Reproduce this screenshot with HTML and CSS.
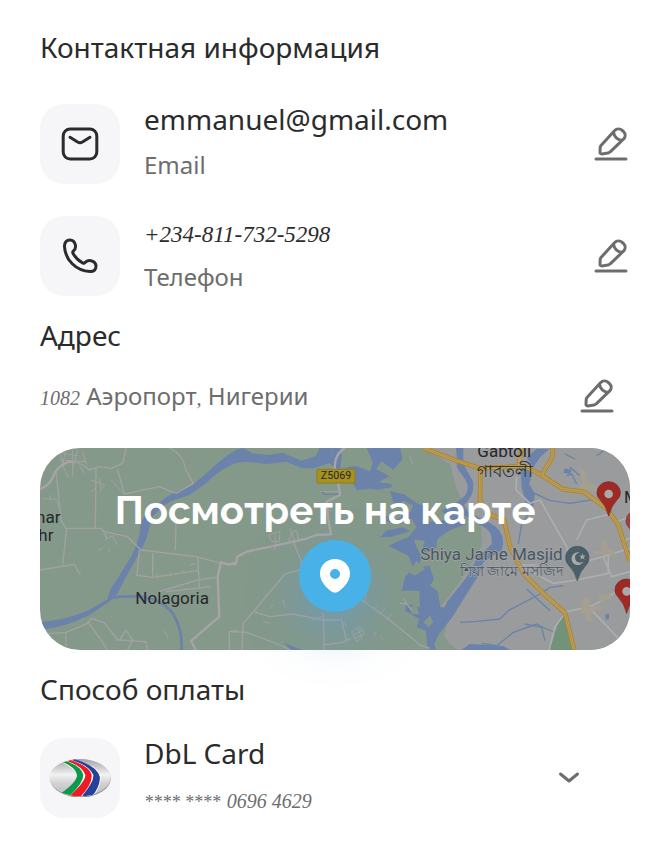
FILE: index.html
```html
<!DOCTYPE html>
<html lang="ru">
<head>
<meta charset="utf-8">
<meta name="viewport" content="width=device-width, initial-scale=1">
<title>Контактная информация</title>
<link rel="stylesheet" href="styles.css">
</head>
<body>
<svg class="sprite" aria-hidden="true">
  <symbol id="pencil" viewBox="0 0 36 36">
    <path d="M2 33H32"/>
    <path transform="translate(-1 -2)" d="M8 21.500 21.700 6.600C23.800 4.400 27 4.300 29.200 6.400L30.500 7.600C32.600 9.600 32.700 12.700 30.700 14.900L17.200 27.800Q16.200 28.800 15 29.100L8.800 29.900Q7 30 7 28.200L7.200 23.500Q7.200 22.400 8 21.500ZM20.500 8.300Q21.800 15.300 29 16.500"/>
  </symbol>
</svg>
<main class="page">
  <section class="section">
    <h2 class="heading">Контактная информация</h2>
    <div class="list">
      <div class="row">
        <div class="tile">
          <svg class="tile-icon" viewBox="0 0 40 40" aria-hidden="true"><rect x="3.200" y="5" width="33.600" height="30" rx="7"/><path d="m10 13.300 7.600 4.700q2.400 1.300 4.800 0l7.600-4.700"/></svg>
        </div>
        <div class="details">
          <p class="title">emmanuel@gmail.com</p>
          <p class="note">Email</p>
        </div>
        <button class="icon-button" type="button" aria-label="Изменить email"><svg class="pencil"><use href="#pencil"/></svg></button>
      </div>
      <div class="row">
        <div class="tile">
          <svg class="tile-icon" viewBox="0 0 40 40" aria-hidden="true"><path d="M4.500 10.500C4.300 6.200 6.500 4 10 4C13.500 4 14.600 5.600 15.400 9C16 11.800 15.600 13 13.300 15.100C12.600 15.800 12.600 16.600 13.100 17.500C15.400 21.600 18.400 24.800 22.600 26.900C23.500 27.400 24.300 27.300 25 26.500C26.800 24.300 28.200 23.900 31 24.700C34.600 25.600 36 27 36 30.300C36 33.800 33.800 35.600 30 35.500C16 35 5.100 23.800 4.500 10.500Z"/></svg>
        </div>
        <div class="details">
          <p class="title"><span class="phone">+234-811-732-5298</span></p>
          <p class="note">Телефон</p>
        </div>
        <button class="icon-button" type="button" aria-label="Изменить телефон"><svg class="pencil"><use href="#pencil"/></svg></button>
      </div>
    </div>
  </section>

  <section class="section">
    <h2 class="heading">Адрес</h2>
    <div class="address">
      <p class="note"><span class="digits">1082</span> Аэропорт<span class="digits">,</span> Нигерии</p>
      <button class="icon-button" type="button" aria-label="Изменить адрес"><svg class="pencil"><use href="#pencil"/></svg></button>
    </div>
    <a class="map" href="#map">
      <svg class="map-art" viewBox="0 0 1770 606" preserveAspectRatio="xMidYMid slice" aria-hidden="true">
        <rect class="land" width="1770" height="606"/>
        <!-- city area -->
        <g transform="translate(930 -12)">
          <path class="city" d="M225 12H860V640H350L300 600 282 575 290 545 270 490 300 425 370 350 397 300 385 225 340 180 318 130 300 60 225 12Z"/>
          <path class="land" d="M300 120 340 180 390 225 397 300 360 365 325 420 275 485 200 400 250 300Z"/>
        </g>
        <!-- rivers -->
        <g transform="translate(-12 -24)">
          <path class="water" d="M12 545Q70 545 155 512L215 478Q218 450 245 415L285 350Q312 300 313 260Q320 220 365 193Q400 158 470 135L530 83Q565 50 600 30L620 24 650 40 700 45 740 38 797 62 840 48 850 24H890L885 60 892 65 832 85 797 85 752 65 692 72 632 65 600 68Q550 88 510 130L460 165 415 180Q385 190 350 230Q340 260 330 300L310 338 268 415 240 468Q215 490 160 525 80 565 16 568Z"/>
          <path class="stream" d="M232 473Q270 467 310 470Q375 476 410 520Q442 570 436 640"/>
        </g>
        <g transform="translate(930 -12)">
          <path class="water" d="M-30 12-24 35-30 75 0 68 18 66 60 82 68 55 50 12H150L158 45 130 78 95 52 78 75 122 98 126 130 80 137 60 134 20 138-5 95-60 60-50 12Z"/>
          <path class="water" d="M120 140 165 152 200 178 232 190 215 235 270 232 320 218 350 240 300 258 262 285 258 312 212 330 225 290 170 285 200 250 185 225 150 240 90 228 120 210 160 215 175 190 130 175Z"/>
          <path class="water" d="M90 280 108 260 160 250 180 262 125 278ZM115 305 160 285 190 278 200 310 215 340 205 370 238 365 252 405 240 425 262 440 272 490 300 488 282 535 235 640 228 560 200 550 208 525 165 500 168 480 210 490 208 440 155 440 165 400 190 370 175 335Z"/>
          <path class="water" d="M318 12Q322 50 320 70L345 105Q362 130 345 155L310 182 275 200 300 222 340 212 395 245Q430 260 425 300L380 345 350 400 290 475Q275 520 230 550L235 625H260L250 590Q310 520 325 490L385 395 400 355 455 318Q472 265 420 237L355 205 340 185Q378 150 368 110L340 60V12Z"/>
          <path class="water" d="M530 40 560 15H598L570 40 550 70ZM512 75 548 80 538 120 555 150 548 195 530 188 515 130ZM300 640 360 600 460 606 500 630V640Z"/>
          <path class="land" d="M145 185 160 170 190 185 180 205ZM175 385 200 350 225 375 195 395ZM180 490 200 485 208 510 185 510ZM220 535 240 515 250 535 235 550ZM85 115 120 95 128 120ZM110 210 145 195 155 220 125 230Z"/>
          <path class="creek" d="M330 535 380 532 450 525 475 500 570 450 600 430 640 425M395 598 440 605 490 565 560 540 590 555 640 575M530 435 600 500M548 145 600 170 660 178 740 165M550 190 515 240 505 300M580 340 625 350"/>
          <path class="creek" d="M660 70 690 95M645 30 675 45M650 95 665 90 680 120M760 20 740 35M525 540 575 550 585 590"/>
        </g>
        <!-- local roads -->
        <g transform="translate(-12 -24)">
          <path class="lane" d="M12 148Q45 135 58 95Q80 65 110 65Q140 70 160 90L190 80 225 85 260 70 270 24M60 90 75 240 90 265 195 265 205 275 275 290 315 330 480 350 555 370M12 390 115 373 133 405M92 265 80 375M180 85 178 265M400 24Q440 40 450 90L472 130 420 160 370 140 265 162 245 90M350 330V410M300 405 350 412 485 392M310 330 303 405M420 240 418 330M485 350 490 445M370 455 485 420 540 412M390 455 525 440M12 583 90 577 155 550 165 535 205 548 245 600 330 605 335 640M90 577V640M155 545 195 600 220 640M250 600 270 570 290 600 275 630M580 640V575L605 573"/>
          <path class="lane thin" d="M70 24 85 90M78 40 130 48M90 24 80 75M110 24V110M125 30 108 90M140 35 152 75M70 60 150 65M85 90 100 115M130 75 145 100M165 120 205 135 190 155M190 115 195 145M180 145 165 155M20 175 60 178 72 205M40 180 45 165M195 265 215 295 235 285M210 280V300M230 290 245 315M185 332 200 325M218 325 220 335M360 400 365 415M400 395 405 410M440 390 445 405M460 375 478 370M385 572 397 595M225 120 262 160"/>
          <path class="road" d="M12 148Q45 135 58 95Q80 65 110 65M602 372 575 373 555 367 545 410 550 530 465 603 485 640"/>
        </g>
        <g transform="translate(570 -24)">
          <path class="road" d="M345 24Q310 45 315 90L325 130 330 165 290 185 295 240 303 283 260 285 225 297 135 317 50 335 22 350 18 368-2 373"/>
          <path class="lane" d="M190 305 215 365 210 390 165 402 70 515 40 550 35 640M70 515 120 530 190 522 280 540H335L350 605M280 520 283 640M280 615 340 607 360 595M0 575 50 577 150 615 200 640M395 480 480 540 570 615 600 625M510 490 530 492 545 510M520 475 530 490"/>
          <path class="lane thin" d="M115 285 150 275 148 305H125ZM185 280 200 270 205 300 175 305ZM135 285V330M180 265 195 310M270 155H325M265 190 295 240M280 215 305 210M75 520 85 510M120 500 130 495M160 480 165 500M245 540 275 530M365 575 390 560 405 580 380 605ZM370 585 400 570M375 595 400 582M385 565 395 595M405 485 410 465M430 510 445 495M450 525 465 505M470 540 485 520M340 545 350 560M430 590 440 575M450 590 460 600M540 50 550 75M100 545 120 550"/>
          <path class="creek" d="M275 155 285 163H325"/>
          <path class="water" d="M162 608 215 630 220 640 185 632Z"/>
        </g>
        <g transform="translate(1170 -24)">
          <path class="park" d="M400 520 435 640H355L385 550Z"/>
          <path class="lane city-lane" d="M260 110 258 150 300 190 330 180 410 320M410 515 480 500 520 480 600 430M480 505 570 600M405 520 375 560 355 640M440 300 470 240 540 222M560 245 600 230M410 320 430 375 520 350 600 325M520 350 530 375 545 410 600 395M285 385 370 430 440 420 535 400V345M270 375 325 375M585 300 600 295"/>
          <path class="block" d="M445 85 465 90 470 120 500 140 510 155 480 152 445 145 458 125ZM515 300 530 302 535 325 555 330 553 345 490 342 485 335 515 330ZM458 475 475 472 480 500 510 492 512 508 482 515 488 545 468 543 465 520 450 518ZM505 468 540 462 545 475 510 485ZM300 380 325 375 320 390Z"/>
          <path class="water" d="M525 525 537 520 537 537 528 540ZM405 85 425 90 420 102 400 98Z"/>
          <path class="highway-edge" d="M-20 24 80 62 150 85 280 78 325 100 400 148 460 155 530 205 565 255 600 365M152 85 150 185 182 225 222 240 240 320 280 400 345 465 405 518 435 640M335 105 368 50V15M265 80 275 24"/>
          <path class="highway" d="M-20 24 80 62 150 85 280 78 325 100 400 148 460 155 530 205 565 255 600 365M152 85 150 185 182 225 222 240 240 320 280 400 345 465 405 518 435 640M335 105 368 50V15M265 80 275 24"/>
          <path class="highway-line" d="M-20 24 80 62 150 85 280 78 325 100 400 148 460 155 530 205 565 255 600 365M152 85 150 185 182 225 222 240 240 320 280 400 345 465 405 518 435 640M335 105 368 50V15"/>
        </g>
        <!-- places -->
        <rect class="shield" x="831" y="64" width="114" height="41" rx="2"/>
        <text class="shield-label" x="888" y="94">Z5069</text>
        <text class="place" x="-12" y="225">nar</text>
        <text class="place" x="-5" y="279">hr</text>
        <text class="place" x="286" y="468">Nolagoria</text>
        <text class="place" x="1312" y="27">Gabtoli</text>
        <text class="place" x="1312" y="88">গাবতলী</text>
        <text class="place" x="1752" y="164">M</text>
        <text class="place landmark" x="1568" y="336">Shiya Jame Masjid</text>
        <text class="place landmark bengali" x="1568" y="385">শিয়া জামে মসজিদ</text>
        <g transform="translate(1170 -24)">
          <path class="pin landmark-pin" d="M442 423Q435 395 418 378Q406 367 407 352A35 33 0 0 1 477 352Q478 367 466 378Q449 395 442 423Z"/>
          <path class="pin-mark" d="M449 338A19 19 0 1 0 461 363A15 15 0 1 1 449 338ZM457 340 460 347 467 347 461 352 464 359 457 355 451 359 453 352 448 347 455 347Z"/>
          <path id="pin" class="pin" d="M536 228Q529 199 512 181Q500 170 501 158A35 33 0 0 1 571 158Q572 170 560 181Q543 199 536 228Z"/>
          <circle class="pin-mark" cx="536" cy="162" r="13"/>
          <use href="#pin" x="54" y="292"/>
          <circle class="pin-mark" cx="590" cy="454" r="13"/>
          <use class="pin-faded" href="#pin" x="87" y="85"/>
        </g>
      </svg>
      <span class="map-overlay">
        <span class="map-title">Посмотреть на карте</span>
        <span class="marker"><svg class="marker-icon" viewBox="0 0 30 34" aria-hidden="true"><path fill-rule="evenodd" d="M15 0C6.500 0 0 6.500 0 14.500C0 22 5.500 28 11 32.300Q15 35 19 32.300C24.500 28 30 22 30 14.500C30 6.500 23.500 0 15 0ZM15 10A5 5 0 1 1 15 20A5 5 0 1 1 15 10Z"/></svg></span>
      </span>
    </a>
  </section>

  <section class="section">
    <h2 class="heading">Способ оплаты</h2>
    <div class="row payment">
      <div class="tile">
        <svg class="card-logo" viewBox="0 0 186 116" role="img" aria-label="DbL">
          <defs>
            <linearGradient id="silver" x1="0" y1="0" x2="0" y2="1">
              <stop offset="0" stop-color="#a4a4a4"/>
              <stop offset=".2" stop-color="#c8c8c8"/>
              <stop offset=".42" stop-color="#f2f2f2"/>
              <stop offset=".65" stop-color="#d2d2d2"/>
              <stop offset="1" stop-color="#bababa"/>
            </linearGradient>
            <clipPath id="oval"><ellipse cx="93" cy="56" rx="92" ry="56"/></clipPath>
          </defs>
          <ellipse cx="94" cy="59" rx="91" ry="56" fill="#8a8a8a"/>
          <ellipse cx="93" cy="56" rx="92" ry="56" fill="url(#silver)"/>
          <g clip-path="url(#oval)">
            <path fill="#fff" d="M42 12 65 0Q150 20 156 52Q156 84 130 116H32L66 88Q90 62 83 44 75 28 42 12Z"/>
            <path fill="#0a9a4b" d="M42 10 52 7Q98 22 103 48Q103 72 64 108L34 104Q84 70 84 48 81 26 42 10Z"/>
            <path fill="#ed1c24" d="M54 6 65 3Q122 22 128 47Q131 74 94 114L62 110Q110 68 109 48 101 22 54 6Z"/>
            <path fill="#24419b" d="M68 3 77 1Q145 20 153 55Q153 84 128 114L100 110Q135 68 133 48 122 20 68 3Z"/>
          </g>
        </svg>
      </div>
      <div class="details">
        <p class="title">DbL Card</p>
        <p class="note"><span class="mask">**** ****</span> <span class="digits">0696 4629</span></p>
      </div>
      <button class="icon-button chevron-button" type="button" aria-label="Выбрать способ оплаты"><svg class="chevron" viewBox="0 0 24 14"><path d="m3.500 3 8.500 7 8.500-7"/></svg></button>
    </div>
  </section>
</main>
</body>
</html>
```

FILE: styles.css
```css
* {
  box-sizing: border-box;
}

body {
  margin: 0;
  background: #fff;
  color: #2b2b2b;
  font-family: "Noto Sans", sans-serif;
}

.sprite {
  position: absolute;
  width: 0;
  height: 0;
}

.page {
  display: flex;
  flex-direction: column;
  gap: 20px;
  padding: 28px 40px 32px;
}

.heading,
.title,
.note {
  margin: 0;
  font-weight: 400;
}

.heading {
  font-size: 28px;
  line-height: 38px;
}

.list {
  display: flex;
  flex-direction: column;
  gap: 32px;
  margin-top: 38px;
}

.row {
  display: flex;
  align-items: center;
  gap: 24px;
}

.payment {
  margin-top: 30px;
}

.tile {
  display: flex;
  flex: none;
  align-items: center;
  justify-content: center;
  width: 80px;
  height: 80px;
  border-radius: 24px;
  background: #f6f6f9;
}

.tile-icon {
  width: 40px;
  height: 40px;
  fill: none;
  stroke: #2b2b2b;
  stroke-width: 3;
  stroke-linecap: round;
  stroke-linejoin: round;
}

.card-logo {
  width: 62px;
}

.details {
  display: flex;
  flex: 1;
  flex-direction: column;
  gap: 10px;
  margin: -4px 0;
}

.title {
  font-size: 28px;
  line-height: 36px;
}

.note {
  color: #6d6d6d;
  font-size: 24px;
  line-height: 36px;
}

.details .note {
  margin-bottom: 4px;
}

.phone,
.digits,
.mask {
  font-family: "Liberation Serif", serif;
  font-style: italic;
  line-height: 1;
}

.phone {
  font-size: 23px;
}

.digits {
  font-size: 20px;
}

.mask {
  font-size: 18px;
}

.icon-button {
  display: flex;
  flex: none;
  padding: 0;
  border: 0;
  background: none;
  color: #6d6d6d;
  cursor: pointer;
}

.pencil {
  width: 36px;
  height: 36px;
  fill: none;
  stroke: currentColor;
  stroke-width: 3;
  stroke-linecap: round;
  stroke-linejoin: round;
}

.chevron-button {
  margin-right: 49px;
}

.chevron {
  width: 24px;
  height: 14px;
  fill: none;
  stroke: currentColor;
  stroke-width: 3;
  stroke-linecap: round;
  stroke-linejoin: round;
}

.address {
  display: flex;
  align-items: center;
  justify-content: space-between;
  margin-top: 24px;
  padding-right: 14px;
}

.map {
  display: grid;
  margin-top: 34px;
  color: #fff;
  text-decoration: none;
}

.map-art,
.map-overlay {
  grid-area: 1 / 1;
}

.map-art {
  width: 100%;
  aspect-ratio: 590 / 202;
  border-radius: 40px;
}

.map-overlay {
  display: flex;
  flex-direction: column;
  align-items: center;
  gap: 4px;
  padding-top: 36px;
}

.map-title {
  margin-right: 20px;
  font-family: Raleway, Inter, sans-serif;
  font-size: 40px;
  font-weight: 700;
  line-height: 52px;
}

.marker {
  display: flex;
  align-items: center;
  justify-content: center;
  width: 72px;
  height: 72px;
  border-radius: 50%;
  background: #48b2e8;
  box-shadow: 0 20px 48px rgba(91, 158, 225, .5);
}

.marker-icon {
  width: 30px;
  height: 34px;
  fill: #fff;
}

.land {
  fill: #84998a;
}

.city {
  fill: #9a9b9d;
}

.park {
  fill: #70937a;
}

.block {
  fill: #a59f92;
}

.water {
  fill: #6b82ab;
}

.stream,
.creek,
.lane,
.road,
.highway,
.highway-edge,
.highway-line {
  fill: none;
  stroke-linejoin: round;
}

.stream {
  stroke: #6b82ab;
  stroke-width: 8;
}

.creek {
  stroke: #6b82ab;
  stroke-width: 4;
}

.lane {
  stroke: #a2a2a2;
  stroke-width: 4;
}

.thin {
  stroke-width: 3;
}

.city-lane {
  stroke: #adaeb0;
  stroke-width: 5;
}

.road {
  stroke: #a8a3a8;
  stroke-width: 7;
}

.highway-edge {
  stroke: #b08524;
  stroke-width: 14;
}

.highway {
  stroke: #b9a26d;
  stroke-width: 8;
}

.highway-line {
  stroke: #b08524;
  stroke-width: 2;
}

.shield {
  fill: #a8921e;
  stroke: #927c1c;
  stroke-width: 3;
}

.shield-label {
  fill: #26262a;
  font-family: Roboto, sans-serif;
  font-size: 32px;
  text-anchor: middle;
}

.place {
  fill: #26272b;
  font-family: Roboto, sans-serif;
  font-size: 51px;
}

.landmark {
  fill: #48565f;
  stroke: #a3a5a8;
  stroke-width: 4;
  paint-order: stroke;
  text-anchor: end;
}

.bengali {
  font-size: 41px;
}

.pin {
  fill: #9f2a25;
  stroke: #7d211f;
  stroke-width: 2;
}

.landmark-pin {
  fill: #4a5f68;
  stroke: #42545c;
}

.pin-mark {
  fill: #a9a9a9;
}

.pin-faded {
  opacity: .8;
}
```
